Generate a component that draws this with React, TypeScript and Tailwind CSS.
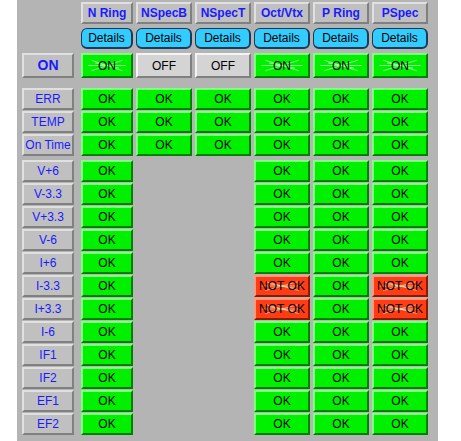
const cols = ["N Ring", "NSpecB", "NSpecT", "Oct/Vtx", "P Ring", "PSpec"];
const on = [true, false, false, true, true, true];
const rows1 = ["ERR", "TEMP", "On Time"];
const rows2 = ["V+6", "V-3.3", "V+3.3", "V-6", "I+6", "I-3.3", "I+3.3", "I-6", "IF1", "IF2", "EF1", "EF2"];
const notOk: Record<string, number[]> = { "I-3.3": [3, 5], "I+3.3": [3, 5] };

const grid = "grid grid-cols-[52px_repeat(6,56px)] gap-x-[3px] [&>*:nth-child(2)]:ml-[4px]";

function Label({ text, bold }: { text: string; bold?: boolean }) {
  return (
    <div
      className={`flex items-center justify-center bg-[#c0c0c0] border-2 border-t-[#e0e0e0] border-l-[#e0e0e0] border-b-[#808080] border-r-[#808080] text-[#1a1aff] ${bold ? "font-bold text-[14px]" : "text-[12px]"}`}
    >
      {text}
    </div>
  );
}

function Sparkle() {
  return (
    <svg className="absolute inset-0 w-full h-full" viewBox="0 0 56 24" preserveAspectRatio="none">
      <g stroke="#d8ffd8" strokeWidth="0.7">
        <line x1="10" y1="6" x2="46" y2="18" />
        <line x1="10" y1="18" x2="46" y2="6" />
        <line x1="6" y1="12" x2="50" y2="12" />
        <line x1="14" y1="9" x2="42" y2="15" />
      </g>
    </svg>
  );
}

function Cell({ kind, text }: { kind: "ok" | "bad" | "off" | "on"; text: string }) {
  const c =
    kind === "bad"
      ? "bg-[#ff3c14] border-t-[#ff9a80] border-l-[#ff9a80] border-b-[#8a1a00] border-r-[#8a1a00]"
      : kind === "off"
        ? "bg-[#d4d4d4] border-t-[#f4f4f4] border-l-[#f4f4f4] border-b-[#808080] border-r-[#808080]"
        : "bg-[#00f000] border-t-[#80ff80] border-l-[#80ff80] border-b-[#008000] border-r-[#008000]";
  return (
    <div className={`relative flex items-center justify-center border-2 text-[12px] text-black ${c}`}>
      {(kind === "on" || kind === "bad") && <Sparkle />}
      <span className="relative">{text}</span>
    </div>
  );
}

export default function App() {
  return (
    <div className="flex w-[461px] h-[441px] bg-white" style={{ fontFamily: '"Liberation Sans", Arial, sans-serif' }}>
      <div className="w-[17px]" />
      <div className="w-[421px] h-full bg-[#b4b4b4] pl-[5px] pt-[2px] flex flex-col">
        <div className={`${grid} h-[21px]`}>
          <div />
          {cols.map((c) => (
            <div key={c} className="flex items-center justify-center bg-[#c0c0c0] border-2 border-t-[#e0e0e0] border-l-[#e0e0e0] border-b-[#808080] border-r-[#808080] text-[#1a1aff] font-bold text-[12px]">
              {c}
            </div>
          ))}
        </div>
        <div className={`${grid} h-[16px] mt-[5px]`}>
          <div />
          {cols.map((c) => (
            <div key={c} className="flex items-center justify-center rounded-[6px] bg-[#33ccff] border border-[#1a3a5a] border-b-2 border-r-2 text-[12px] text-black">
              Details
            </div>
          ))}
        </div>
        <div className={`${grid} h-[24px] mt-[9px]`}>
          <Label text="ON" bold />
          {on.map((v, i) => (
            <Cell key={i} kind={v ? "on" : "off"} text={v ? "ON" : "OFF"} />
          ))}
        </div>
        <div className="flex flex-col gap-[2px] mt-[11px]">
          {rows1.map((r) => (
            <div key={r} className={`${grid} h-[21px]`}>
              <Label text={r} />
              {cols.map((c) => (
                <Cell key={c} kind="ok" text="OK" />
              ))}
            </div>
          ))}
        </div>
        <div className="flex flex-col gap-[2px] mt-[5px]">
          {rows2.map((r) => (
            <div key={r} className={`${grid} h-[21px]`}>
              <Label text={r} />
              {cols.map((c, i) =>
                i === 1 || i === 2 ? (
                  <div key={c} />
                ) : notOk[r]?.includes(i) ? (
                  <Cell key={c} kind="bad" text="NOT OK" />
                ) : (
                  <Cell key={c} kind="ok" text="OK" />
                ),
              )}
            </div>
          ))}
        </div>
      </div>
    </div>
  );
}
